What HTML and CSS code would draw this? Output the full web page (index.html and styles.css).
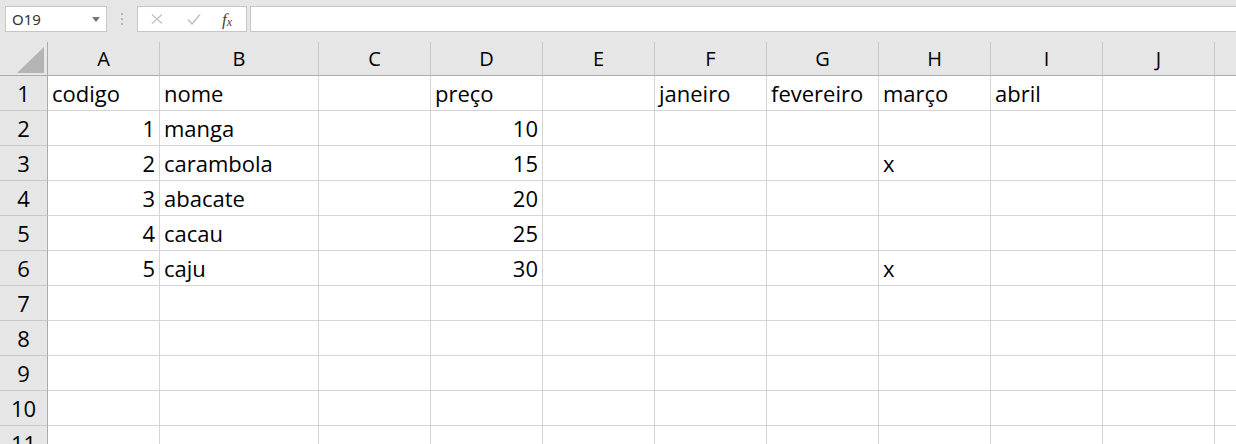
FILE: index.html
```html
<!DOCTYPE html>
<html lang="pt">
<head>
  <meta charset="UTF-8">
  <title>Planilha</title>
  <link rel="stylesheet" href="styles.css">
</head>
<body>

  <!-- Formula bar -->
  <div class="toolbar">
    <div class="name-box">
      <span>O19</span>
      <svg class="caret" width="8" height="5" viewBox="0 0 8 5"><path d="M0 0h8L4 5z" fill="#777"/></svg>
    </div>
    <div class="grip">
      <svg width="3" height="12" viewBox="0 0 3 12"><rect x="0" y="0" width="2" height="2" fill="#b5b5b5"/><rect x="0" y="5" width="2" height="2" fill="#b5b5b5"/><rect x="0" y="10" width="2" height="2" fill="#b5b5b5"/></svg>
    </div>
    <div class="fx-buttons">
      <svg class="btn-cancel" width="12" height="10" viewBox="0 0 12 10"><path d="M1 0.5l10 9M11 0.5l-10 9" stroke="#c4c4c4" stroke-width="1.4" fill="none"/></svg>
      <svg class="btn-enter" width="14" height="11" viewBox="0 0 14 11"><path d="M1 5.5l4 4.5L13 0.5" stroke="#c4c4c4" stroke-width="1.6" fill="none"/></svg>
      <span class="fx">f<sub>x</sub></span>
    </div>
    <div class="formula-input"></div>
  </div>

  <!-- Sheet -->
  <div class="sheet" id="sheet"></div>

  <script>
    // last column is only partly visible, so its letter stays off
    const columns = ["A", "B", "C", "D", "E", "F", "G", "H", "I", "J", ""];
    const data = [
      ["codigo", "nome", "", "preço", "", "janeiro", "fevereiro", "março", "abril"],
      [1, "manga", "", 10],
      [2, "carambola", "", 15, "", "", "", "x"],
      [3, "abacate", "", 20],
      [4, "cacau", "", 25],
      [5, "caju", "", 30, "", "", "", "x"]
    ];
    const totalRows = 11;
    const sheet = document.getElementById("sheet");

    function addCell(cls, text) {
      const div = document.createElement("div");
      div.className = cls;
      div.textContent = text;
      sheet.appendChild(div);
    }

    // Header row
    const corner = document.createElement("div");
    corner.className = "corner";
    corner.innerHTML = '<svg width="27" height="26" viewBox="0 0 27 26"><path d="M27 0V26H0z" fill="#b4b4b4"/></svg>';
    sheet.appendChild(corner);
    columns.forEach(c => addCell("col-head", c));

    // Rows
    for (let r = 0; r < totalRows; r++) {
      addCell("row-head", r + 1);
      const row = data[r] || [];
      columns.forEach((c, i) => {
        const value = row[i] === undefined ? "" : row[i];
        addCell(typeof value === "number" ? "cell num" : "cell", value);
      });
    }
  </script>

</body>
</html>
```

FILE: styles.css
```css
body {
  margin: 0;
  background-color: #e6e6e6;
  font-family: "Open Sans", "Noto Sans", sans-serif;
  color: #000;
  overflow: hidden;
  height: 444px;
}
.toolbar {
  display: flex;
  align-items: flex-start;
  height: 42px;
  padding: 6px 0 0 5px;
  box-sizing: border-box;
}
.name-box {
  width: 102px;
  height: 26px;
  box-sizing: border-box;
  border: 1px solid #c6c6c6;
  background-color: #fff;
  display: flex;
  align-items: center;
  justify-content: space-between;
  padding: 0 6px 0 6px;
  font-family: "Noto Sans", sans-serif;
  font-size: 15px;
  color: #333;
}
.grip {
  width: 30px;
  display: flex;
  justify-content: center;
  padding-top: 7px;
}
.fx-buttons {
  width: 110px;
  height: 26px;
  box-sizing: border-box;
  border: 1px solid #c6c6c6;
  background-color: #fff;
  display: flex;
  align-items: center;
  padding-left: 13px;
}
.btn-cancel {
  margin-right: 24px;
}
.btn-enter {
  margin-right: 21px;
}
.fx {
  font-family: "Liberation Serif", serif;
  font-style: italic;
  font-size: 17px;
  color: #444;
  line-height: 1;
}
.fx sub {
  font-size: 12px;
  vertical-align: -1px;
}
.formula-input {
  flex: 1;
  height: 26px;
  box-sizing: border-box;
  margin-left: 3px;
  margin-right: -4px;
  border: 1px solid #c6c6c6;
  background-color: #fff;
}
.sheet {
  display: grid;
  grid-template-columns: 48px 112px 159px repeat(9, 112px);
  grid-template-rows: 34px;
  grid-auto-rows: 35px;
}
.sheet > div {
  box-sizing: border-box;
  display: flex;
  align-items: flex-end;
  white-space: nowrap;
  line-height: 1;
}
.corner {
  border-right: 1px solid #ababab;
  border-bottom: 1px solid #ababab;
  justify-content: flex-end;
  padding: 0 3px 2px 0;
}
.col-head {
  justify-content: center;
  font-size: 20px;
  border-right: 1px solid #c8c8c8;
  border-bottom: 1px solid #ababab;
  padding-bottom: 6px;
}
.row-head {
  justify-content: center;
  font-size: 22px;
  border-right: 1px solid #ababab;
  border-bottom: 1px solid #c8c8c8;
  padding-bottom: 6px;
}
.cell {
  background-color: #fff;
  font-size: 22px;
  border-right: 1px solid #d4d4d4;
  border-bottom: 1px solid #d4d4d4;
  padding: 0 4px 6px 4px;
}
.cell.num {
  justify-content: flex-end;
}
```
